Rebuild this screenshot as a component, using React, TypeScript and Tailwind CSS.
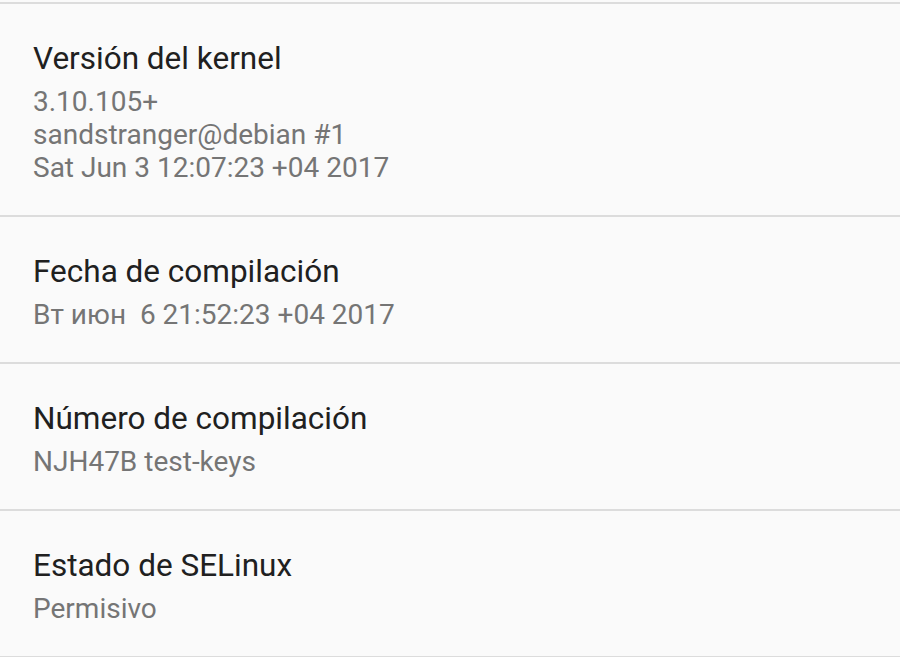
import React from "react";

const items: { title: string; lines: string[] }[] = [
  {
    title: "Versión del kernel",
    lines: ["3.10.105+", "sandstranger@debian #1", "Sat Jun 3 12:07:23 +04 2017"],
  },
  { title: "Fecha de compilación", lines: ["Вт июн  6 21:52:23 +04 2017"] },
  { title: "Número de compilación", lines: ["NJH47B test-keys"] },
  { title: "Estado de SELinux", lines: ["Permisivo"] },
];

export default function App() {
  return (
    <div
      className="w-[900px] h-[657px] overflow-hidden bg-[#fafafa] pt-[2px]"
      style={{ fontFamily: "Roboto, 'Noto Sans', sans-serif" }}
    >
      {items.map((it, i) => (
        <div
          key={i}
          className={`border-t-2 border-[#dcdcdc] pl-[33px] pt-[35px] ${i === 3 ? "pb-[31px] border-b-2" : "pb-[31px]"}`}
        >
          <div className="text-[31.5px] leading-[40px] text-[#202020]">{it.title}</div>
          <div className="mt-[6px] text-[28px] leading-[33px] text-[#757575] whitespace-pre">
            {it.lines.map((l, j) => (
              <div key={j}>{l}</div>
            ))}
          </div>
        </div>
      ))}
    </div>
  );
}
